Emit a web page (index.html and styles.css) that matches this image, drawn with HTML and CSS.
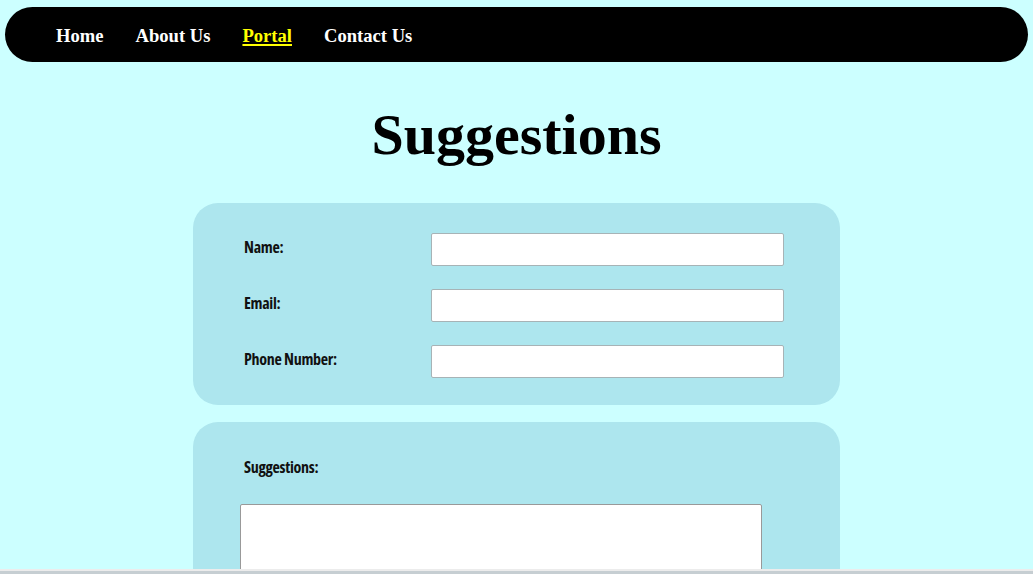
FILE: index.html
```html
<!DOCTYPE html>
<html lang="en">
<head>
<meta charset="utf-8">
<title>Suggestions</title>
<link rel="stylesheet" href="styles.css">
</head>
<body>
<nav class="topnav">
  <a class="nav-link" href="#">Home</a>
  <a class="nav-link" href="#">About Us</a>
  <a class="nav-link active" href="#">Portal</a>
  <a class="nav-link" href="#">Contact Us</a>
</nav>
<main class="page">
  <h1 class="title">Suggestions</h1>
  <form class="form">
    <section class="panel panel-info">
      <label class="field-label" for="name">Name:</label>
      <input class="field-input" id="name" type="text">
      <label class="field-label" for="email">Email:</label>
      <input class="field-input" id="email" type="email">
      <label class="field-label" for="phone">Phone Number:</label>
      <input class="field-input" id="phone" type="tel">
    </section>
    <section class="panel panel-text">
      <label class="field-label text-label" for="sugg">Suggestions:</label>
      <textarea class="field-area" id="sugg"></textarea>
    </section>
  </form>
</main>
<div class="window-edge"></div>
</body>
</html>
```

FILE: styles.css
```css
html, body {
  margin: 0;
  padding: 0;
  background: #ccffff;
}

body {
  font-family: "Liberation Serif", "DejaVu Serif", serif;
  overflow: hidden;
  height: 574px;
}

.topnav {
  margin: 7px 5px 0;
  height: 55px;
  background: #000;
  border-radius: 28px;
  display: flex;
  align-items: center;
  gap: 32px;
  padding-left: 51px;
  box-sizing: border-box;
}

.nav-link {
  color: #fff;
  text-decoration: none;
  font-family: "Liberation Serif", serif;
  font-weight: bold;
  font-size: 18.6px;
  line-height: 1;
  padding-top: 4px;
}

.nav-link.active {
  color: #ffff00;
  text-decoration: underline;
  text-decoration-thickness: 2px;
  text-underline-offset: 2px;
}

.title {
  margin: 44px 0 39px;
  text-align: center;
  font-family: "Liberation Serif", serif;
  font-weight: bold;
  font-size: 58px;
  line-height: 58px;
  color: #000;
}

.form {
  display: flex;
  flex-direction: column;
  gap: 17px;
}

.panel {
  width: 647px;
  margin: 0 auto;
  background: #ade6ee;
  border-radius: 25px;
  box-sizing: border-box;
}

.panel-info {
  padding: 30px 0 27px 51px;
  display: grid;
  grid-template-columns: 187px 353px;
  row-gap: 23px;
  align-items: center;
}

.panel-info .field-label {
  margin-bottom: 6px;
}

.field-label {
  font-family: "Open Sans", "DejaVu Sans Condensed", sans-serif;
  font-stretch: 75%;
  font-weight: 700;
  font-size: 16px;
  letter-spacing: -0.3px;
  line-height: 18px;
  color: #111;
}

.field-input {
  height: 33px;
  width: 353px;
  box-sizing: border-box;
  margin: 0;
  border: 1px solid #a7b3b6;
  border-radius: 2px;
  background: #fff;
}

.panel-text {
  padding: 36px 0 30px 47px;
  display: flex;
  flex-direction: column;
  align-items: flex-start;
}

.text-label {
  margin-left: 4px;
}

.field-area {
  margin-top: 28px;
  width: 522px;
  height: 150px;
  box-sizing: border-box;
  border: 1px solid #999;
  border-radius: 2px;
  background: #fff;
  resize: none;
}

.window-edge {
  position: fixed;
  left: 0;
  right: 0;
  bottom: 0;
  height: 5px;
  background: #c6ced2;
  border-top: 2px solid #ececec;
  box-sizing: border-box;
}
```
